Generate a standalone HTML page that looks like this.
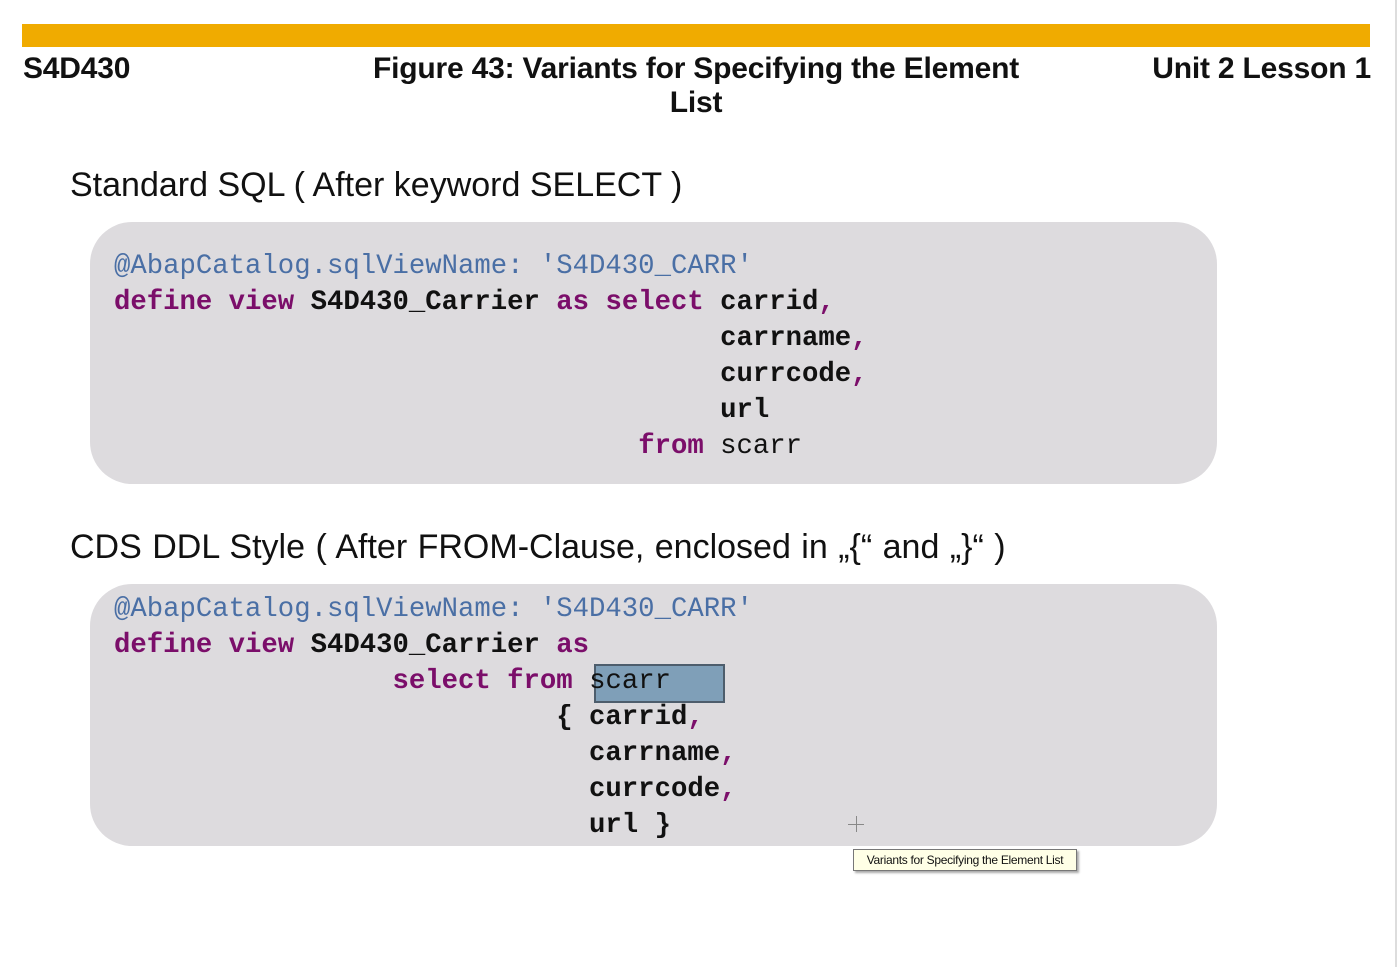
<!DOCTYPE html>
<html><head><meta charset="utf-8"><style>
body{margin:0;width:1398px;height:967px;background:#fff;position:relative;overflow:hidden;font-family:"Liberation Sans",sans-serif}
.bar{position:absolute;left:22px;top:24px;width:1348px;height:23px;background:#f0ab00}
.hd{position:absolute;font-weight:bold;font-size:30px;color:#111;line-height:34px;letter-spacing:-0.2px}
.h2{position:absolute;left:70px;font-size:34px;color:#111;white-space:nowrap}
.box{position:absolute;left:90px;width:1127px;height:262px;background:#dddbde;border-radius:42px}
.code{position:absolute;left:114px;font-family:"Liberation Mono",monospace;font-size:27.3px;line-height:36px;white-space:pre;color:#111;font-weight:bold}
.a{color:#4a6fa5;font-weight:normal}.k{color:#7b0e6a}.n{font-weight:normal}
.hl{position:absolute;left:594px;top:664px;width:127px;height:35px;background:#7f9fb8;border:2px solid #4d5d6c}
.tip{position:absolute;left:853px;top:849px;width:222px;height:20px;border:1px solid #777;background:#ffffe6;font-size:12px;line-height:20px;text-align:center;color:#111;box-shadow:2px 2px 2px #aaa;letter-spacing:-0.3px}
.vl{position:absolute;left:1395px;top:0;width:2px;height:967px;background:#ddd}
</style></head><body>
<div class="bar"></div>
<div class="hd" style="left:23px;top:52px">S4D430</div>
<div class="hd" style="left:340px;top:52px;width:712px;text-align:center">Figure 43: Variants for Specifying the Element<br>List</div>
<div class="hd" style="left:1100px;top:52px;width:271px;text-align:right">Unit 2 Lesson 1</div>
<div class="h2" style="top:166px">Standard SQL ( After keyword SELECT )</div>
<div class="box" style="top:222px"></div>
<div class="code" style="top:249px"><span class="a">@AbapCatalog.sqlViewName: 'S4D430_CARR'</span>
<span class="k">define view </span>S4D430_Carrier <span class="k">as select </span>carrid<span class="k">,</span>
                                     carrname<span class="k">,</span>
                                     currcode<span class="k">,</span>
                                     url
                                <span class="k">from</span> <span class="n">scarr</span></div>
<div class="h2" style="top:528px;word-spacing:1px">CDS DDL Style ( After FROM-Clause, enclosed in „{“ and  „}“  )</div>
<div class="box" style="top:584px"></div>
<div class="hl"></div>
<div class="code" style="top:592px"><span class="a">@AbapCatalog.sqlViewName: 'S4D430_CARR'</span>
<span class="k">define view </span>S4D430_Carrier <span class="k">as</span>
                 <span class="k">select from</span> <span class="n">scarr</span>
                           { carrid<span class="k">,</span>
                             carrname<span class="k">,</span>
                             currcode<span class="k">,</span>
                             url }</div>
<div style="position:absolute;left:848px;top:824px;width:16px;height:1px;background:#888"></div>
<div style="position:absolute;left:856px;top:816px;width:1px;height:16px;background:#888"></div>
<div class="tip">Variants for Specifying the Element List</div>
<div class="vl"></div>
</body></html>
